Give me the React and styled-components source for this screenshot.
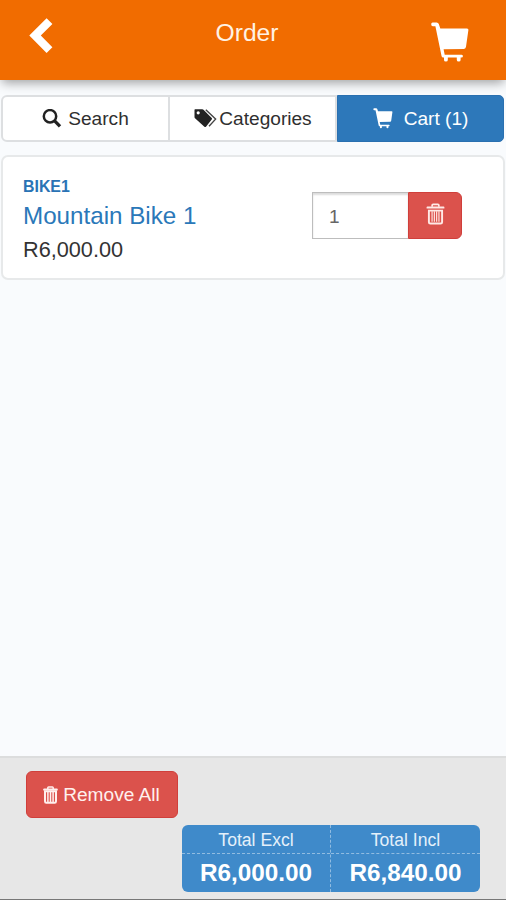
import { useState } from "react";
import styled, { createGlobalStyle, css } from "styled-components";

const GlobalStyle = createGlobalStyle`
	* {
		box-sizing: border-box;
	}

	body {
		margin: 0;
		background-color: #f9fbfd;
		color: #333;
		font-family: "Liberation Sans", Arial, sans-serif;
	}

	button,
	input {
		font-family: inherit;
		margin: 0;
	}

	p {
		margin: 0;
	}
`;

const Page = styled.div`
	display: flex;
	flex-direction: column;
	height: 100vh;
	min-height: 900px;
	overflow: hidden;
`;

const Header = styled.header`
	display: grid;
	grid-template-columns: 82px 1fr 95px;
	height: 80px;
	flex-shrink: 0;
	background-color: #f16c00;
	box-shadow: 0 5px 10px -2px rgba(0, 0, 0, 0.36);
`;

const HeaderButton = styled.button`
	display: flex;
	align-items: flex-start;
	padding: ${(props) => props.$padding};
	border: none;
	background: none;
	color: #fff;
`;

const Title = styled.h1`
	margin: 0;
	padding: 18px 0 0 1px;
	color: #fff2e4;
	font-size: 24.6px;
	font-weight: 400;
	line-height: 29px;
	text-align: center;
`;

const Content = styled.main`
	display: flex;
	flex-direction: column;
	flex: 1;
	gap: 13px;
	padding: 15px 1px 0;
`;

const Tabs = styled.nav`
	display: grid;
	grid-template-columns: 169px 167px 1fr;
	height: 47px;
	padding-right: 1px;
`;

const Tab = styled.button`
	display: flex;
	align-items: center;
	justify-content: center;
	gap: ${(props) => props.$gap};
	padding: 0;
	border: 2px solid #dddfe1;
	border-left-width: ${(props) => (props.$first ? "2px" : "0")};
	border-radius: ${(props) => (props.$first ? "6px 0 0 6px" : "0")};
	background-color: #fff;
	color: #2f2f2f;
	font-size: 19.1px;
	line-height: 24px;
	white-space: nowrap;

	${(props) =>
		props.$active &&
		css`
			border: 1px solid #2a70b0;
			border-radius: 0 5px 5px 0;
			background-color: #2d78ba;
			color: #fff;
		`}
`;

const Card = styled.section`
	display: flex;
	justify-content: space-between;
	height: 125px;
	padding: 20px 40px 0 20px;
	border: 2px solid #e7e9ea;
	border-radius: 7px;
	background-color: #fff;
`;

const Code = styled.p`
	color: #2a73b5;
	font-size: 15.9px;
	font-weight: 700;
	line-height: 20px;
`;

const Name = styled.p`
	margin-top: 4px;
	color: #2a78b9;
	font-size: 24.2px;
	line-height: 30px;
`;

const Price = styled.p`
	margin-top: 7px;
	font-size: 21.7px;
	line-height: 24px;
`;

const Quantity = styled.div`
	display: flex;
	height: 47px;
	margin: 15px 1px 0 0;
`;

const QuantityInput = styled.input`
	width: 96px;
	padding: 2px 16px 0;
	border: 1px solid #bdbdbd;
	border-right: none;
	border-radius: 0;
	background-color: #fff;
	box-shadow: inset 0 2px 2px rgba(0, 0, 0, 0.14);
	color: #666;
	font-size: 19px;
	outline: none;
`;

const DangerButton = styled.button`
	display: flex;
	align-items: center;
	justify-content: center;
	border: 1px solid #d03f3b;
	background-color: #db524c;
	color: #fff;
`;

const DeleteButton = styled(DangerButton)`
	width: 54px;
	padding: 0 0 4px;
	border-radius: 0 6px 6px 0;
	color: #ffe9e6;
`;

const RemoveAllButton = styled(DangerButton)`
	gap: 5px;
	width: 152px;
	height: 47px;
	padding: 0 1px 0 0;
	border-radius: 6px;
	color: #fff0ee;
	font-size: 19.1px;
	white-space: nowrap;
`;

const Footer = styled.footer`
	display: flex;
	flex-direction: column;
	flex-shrink: 0;
	gap: 7px;
	height: 144px;
	padding: 13px 26px 0;
	border-top: 2px solid #dcdddd;
	border-bottom: 1px solid #777;
	background-color: #e7e7e7;
`;

const Totals = styled.div`
	display: grid;
	grid-template-columns: 148px 150px;
	align-self: flex-end;
	height: 67px;
	border-radius: 6px;
	background-color: #3f8aca;
	color: #fff;
	overflow: hidden;
`;

const Total = styled.div`
	display: grid;
	grid-template-rows: 29px 38px;
	text-align: center;

	& + & {
		border-left: 1px dashed #91bce1;
	}
`;

const TotalLabel = styled.p`
	border-bottom: 1px dashed #91bce1;
	color: #e4f0fa;
	font-size: 17.6px;
	line-height: 30px;
`;

const TotalValue = styled.p`
	font-size: 24.3px;
	font-weight: 700;
	line-height: 37px;
`;

function BackIcon() {
	return (
		<svg width="24" height="36" viewBox="0 0 24 36" fill="currentColor">
			<path d="M17.6 0.2 23.4 6 11.8 17.6 23.4 29.2 17.6 35 0.3 17.6Z" />
		</svg>
	);
}

function CartIcon({ width, height }) {
	return (
		<svg width={width} height={height} viewBox="0 0 38 41" fill="currentColor">
			<path d="M1.6.4h4q1.7 0 2.2 1.5L9.3 6.4H36q1.6 0 1.4 1.6l-2.4 16.8q-.3 1.8-2 2.1L12.6 27.3l1.1 5.5H30.5q1.4 0 1.4 1.4t-1.4 1.4H29.6v2.4q0 1.5-1.9 1.5t-1.9-1.5v-2.4h-9v2.4q0 1.5-1.9 1.5t-1.9-1.5v-2.4h-.8q-1.3 0-1.6-1.3L4.4 4.2H1.8Q.2 4 .2 2.2T1.6.4Z" />
		</svg>
	);
}

function SearchIcon() {
	return (
		<svg width="20" height="20" viewBox="0 0 20 20" fill="none" stroke="#222">
			<circle cx="8" cy="7.3" r="6.2" strokeWidth="2.5" />
			<path d="m12.4 11.7 5.6 5.6" strokeWidth="3.3" />
		</svg>
	);
}

function TagsIcon() {
	return (
		<svg width="25" height="20" viewBox="0 0 25 20" fill="#222">
			<path
				fillRule="evenodd"
				d="M2.1.2h7.2q.7 0 1.2.5l8.2 8.2q.8.8 0 1.6l-5.7 7.2q-.8.8-1.6 0L2 9.2q-.5-.5-.5-1.2V.7q0-.5.6-.5ZM5.2 2.2a1.6 1.6 0 1 0 0 3.2 1.6 1.6 0 0 0 0-3.2Z"
			/>
			<path d="m12.8.8 9.8 9.3-6.6 7.2" fill="none" stroke="#444" strokeWidth="1.4" />
		</svg>
	);
}

function TrashIcon() {
	return (
		<svg width="19" height="22" viewBox="0 0 19 23" fill="none" stroke="currentColor">
			<path d="M6 4V2.4q0-1 1-1h5q1 0 1 1V4" strokeWidth="1.8" />
			<path d="M.2 5.8V4.6q0-1 .8-1h17q.8 0 .8 1v1.2Z" fill="currentColor" stroke="none" />
			<path d="M2.6 8h13.8v12q0 1.5-1.5 1.5H4.1q-1.5 0-1.5-1.5Z" strokeWidth="2" />
			<path d="M5.9 8.6v11M8.3 8.6v11M10.7 8.6v11M13.1 8.6v11" strokeWidth="1.2" />
		</svg>
	);
}

function SmallTrashIcon() {
	return (
		<svg width="15" height="18" viewBox="0 0 15 18" fill="none" stroke="currentColor">
			<path d="M4.8 3V1.8q0-.8.8-.8h3.8q.8 0 .8.8V3" strokeWidth="1.5" />
			<path d="M.3 4.6V3.2q0-.7.7-.7h13q.7 0 .7.7v1.4Z" fill="currentColor" stroke="none" />
			<path d="M2 5.2h11v10q0 1.5-1.3 1.5H3.3Q2 16.7 2 15.2Z" strokeWidth="2" />
			<path d="M4.9 5.3v10.7M7.5 5.3v10.7M10.1 5.3v10.7" strokeWidth="1.5" />
		</svg>
	);
}

const totals = [
	{ label: "Total Excl", value: "R6,000.00" },
	{ label: "Total Incl", value: "R6,840.00" },
];

function App() {
	const [quantity, setQuantity] = useState("1");

	return (
		<>
			<GlobalStyle />
			<Page>
				<Header>
					<HeaderButton $padding="18px 0 0 29px" aria-label="Back">
						<BackIcon />
					</HeaderButton>
					<Title>Order</Title>
					<HeaderButton $padding="22px 0 0 20px" aria-label="Cart">
						<CartIcon width={38} height={41} />
					</HeaderButton>
				</Header>
				<Content>
					<Tabs>
						<Tab $first $gap="6px">
							<SearchIcon />
							Search
						</Tab>
						<Tab $gap="1px">
							<TagsIcon />
							Categories
						</Tab>
						<Tab $active $gap="11px">
							<CartIcon width={20} height={21} />
							Cart (1)
						</Tab>
					</Tabs>
					<Card>
						<div>
							<Code>BIKE1</Code>
							<Name>Mountain Bike 1</Name>
							<Price>R6,000.00</Price>
						</div>
						<Quantity>
							<QuantityInput
								value={quantity}
								onChange={(e) => setQuantity(e.target.value)}
								aria-label="Quantity"
							/>
							<DeleteButton aria-label="Delete">
								<TrashIcon />
							</DeleteButton>
						</Quantity>
					</Card>
				</Content>
				<Footer>
					<RemoveAllButton>
						<SmallTrashIcon />
						Remove All
					</RemoveAllButton>
					<Totals>
						{totals.map((total) => (
							<Total key={total.label}>
								<TotalLabel>{total.label}</TotalLabel>
								<TotalValue>{total.value}</TotalValue>
							</Total>
						))}
					</Totals>
				</Footer>
			</Page>
		</>
	);
}

export default App;
